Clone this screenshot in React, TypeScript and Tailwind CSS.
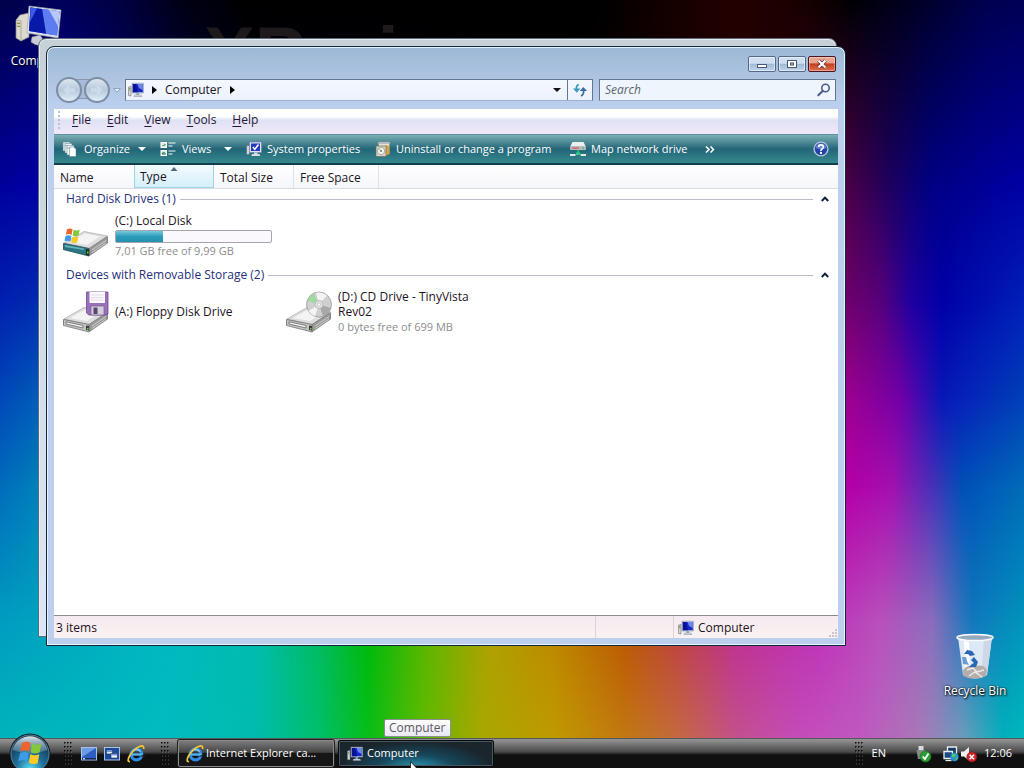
import React from "react";

/* ---------- wallpaper ---------- */

type Band = { from: number; to: number; colors: string };

const BANDS: Band[] = [
  {
    from: 100,
    to: 100,
    colors:
      "#00b4bb 0%, #00bcc0 16%, #00bcae 25%, #00bf6c 31%, #08be18 36%, #5abb00 41%, #a8a800 47%, #c09a00 54%, #c27812 61%, #c46a3e 66%, #c4508e 72%, #c44cba 78%, #c058c0 84%, #a87ab8 90%, #6c9cbc 94%, #00b0bc 98%, #00b8bc 100%",
  },
  {
    from: 84,
    to: 100,
    colors:
      "#009cc0 0%, #00b8c0 16%, #00bcae 25%, #00bb62 31%, #00b808 36%, #62b400 42%, #b0a000 48%, #bc8600 54%, #bb5400 61%, #bc3e40 66%, #bc2e90 72%, #be30b8 80%, #b850bc 86%, #8a6cbc 91%, #1078bc 95%, #0094bc 100%",
  },
  {
    from: 66,
    to: 84,
    colors:
      "#006cbc 0%, #0088b8 5%, #0090a0 30%, #508000 45%, #a04000 62%, #b00080 76%, #b400a8 83%, #a410b0 87%, #4830b8 91%, #0050b8 94%, #006cb8 100%",
  },
  {
    from: 54,
    to: 66,
    colors:
      "#0048b8 0%, #0064b8 5%, #006090 30%, #405000 50%, #803000 68%, #980080 80%, #9c0090 83%, #7000a8 88%, #0818b8 92%, #0040b8 100%",
  },
  {
    from: 41,
    to: 54,
    colors:
      "#0020b0 0%, #0030b0 5%, #004080 30%, #303000 50%, #700020 68%, #740068 82%, #58007c 86%, #2000a0 89%, #0000a8 92%, #0020b8 100%",
  },
  {
    from: 25,
    to: 41,
    colors:
      "#00009a 0%, #0000a8 5%, #000020 25%, #080000 55%, #240000 74%, #4c0044 82.500%, #1c0060 87%, #000084 91%, #0000a4 100%",
  },
  {
    from: 0,
    to: 25,
    colors:
      "#00004a 0%, #00005c 6%, #000040 12%, #000014 18%, #000000 24%, #000000 58%, #160000 66%, #240000 72%, #160000 79%, #000004 83%, #00001c 88%, #00004e 96%, #000054 100%",
  },
];

function Wallpaper() {
  return (
    <div className="absolute inset-0" aria-hidden="true">
      {BANDS.map((b) => (
        <div
          key={b.from}
          className="absolute inset-0"
          style={{
            backgroundImage: `linear-gradient(90deg, ${b.colors})`,
            maskImage:
              b.from === 100
                ? undefined
                : `linear-gradient(180deg, #000 ${b.from}%, transparent ${b.to}%)`,
          }}
        />
      ))}
    </div>
  );
}

/* ---------- icons ---------- */

function MonitorIcon({ className = "size-4" }: { className?: string }) {
  return (
    <svg viewBox="0 0 16 16" className={className} aria-hidden="true">
      <path d="M0.5 5 L3 4.500 V14 L0.5 13.5Z" fill="#d9dccf" stroke="#6a7078" strokeWidth=".6" />
      <path d="M1 6.500h1.400M1 8h1.400" stroke="#6c8c2c" strokeWidth=".8" />
      <path d="M4 1.200 H15.5 V11 H4Z" fill="#c9d3e6" stroke="#8795b4" strokeWidth=".6" />
      <path d="M4.800 2 H14.800 V10.200 H4.800Z" fill="#1828c4" />
      <path d="M9.5 2 H14.8 V8 L11 6Z" fill="#6e86ec" />
      <path d="M4.800 2h3.200l2 8.200H4.800z" fill="#0a1294" />
      <path d="M8.5 11h2.5v2H8.5z" fill="#9aa3b4" />
      <path d="M6.5 13h6.5l.8 1.5H6z" fill="#dfe4ea" stroke="#7b8494" strokeWidth=".5" />
    </svg>
  );
}

function DesktopComputerIcon() {
  return (
    <svg viewBox="0 0 48 42" className="h-[42px] w-12" aria-hidden="true">
      <path d="M1 16 L5 11 L14 9 V33 L6 37 L1 34Z" fill="#dcdad0" stroke="#8b8b88" strokeWidth=".7" />
      <path d="M1 16 L6 17 V37" fill="none" stroke="#a9a89c" />
      <path d="M2 19l3 .6M2 22l3 .6" stroke="#8b8620" strokeWidth="1.2" />
      <path d="M17 33 L25 31 L31 40 Q24 44 16 38Z" fill="#c9ccd4" stroke="#8c8f98" strokeWidth=".6" />
      <path d="M14 2 L46 6 L43 34 L12 29Z" fill="#dfe2e8" stroke="#a2a6b0" strokeWidth=".7" />
      <path d="M15.500 3.500 L44.500 7.200 L42 31.500 L14 27Z" fill="#2a50e0" />
      <path d="M27 5 L44.500 7.200 L42 31.500 L31 29.700Z" fill="#5c7cf0" />
      <path d="M34 5.900 L44.500 7.200 L43 22Z" fill="#b6c8ff" />
      <path d="M15.500 3.500 L27 5 L31 29.700 L14 27Z" fill="#0818a8" />
      <path d="M15.500 3.500 L22 4.300 L15 18Z" fill="#3c5ae8" />
    </svg>
  );
}

function BinIcon() {
  return (
    <svg viewBox="0 0 40 48" className="h-12 w-10" aria-hidden="true">
      <path d="M3 4 L37 4 L32 42 Q20 49 8 42Z" fill="#e6edf8" fillOpacity=".96" />
      <path d="M29 6 L37 4 L32 42 L26 45Z" fill="#cdd7e6" />
      <path d="M9 8 L14 9 L15 42 L10 40Z" fill="#fff" />
      <path d="M8 37 Q14 30 20 34 Q27 30 32 37 L31 43 Q20 49 8.500 43Z" fill="#b3adab" />
      <path d="M12 37l6-2 4 4 7-2M14 43l6-4 7 5" stroke="#ece9e6" strokeWidth="1.5" fill="none" />
      <ellipse cx="20" cy="4.500" rx="18" ry="3" fill="#97a9bd" stroke="#f7fbff" strokeWidth="1.500" />
      <path d="M9 21 L12 17 L17 18 L20 22 L15 23 L13 21Z" fill="#2a66b8" />
      <path d="M19 24 L23 29 L21 34 L14 34 L17 31 L19 30 L16 27Z" fill="#2a66b8" />
      <path d="M7 24 L11 24 L12 28 L14 32 L8 31Z" fill="#6c9cd8" />
    </svg>
  );
}

function DriveBody() {
  return (
    <>
      <path d="M1 32 L22 20 L46 25 L46 31 L27 44 L1 37Z" fill="#9a9a9a" />
      <path d="M2 31 L22 19.500 L45.500 24 L27 36.500Z" fill="#dedede" stroke="#a0a0a0" strokeWidth=".6" />
      <path d="M8 30 L23 21.500 L38 24.500 L25 33Z" fill="#f4f4f4" />
      <path d="M27 36.500 L45.500 24.500 V31 L27 44Z" fill="#999" stroke="#777" strokeWidth=".5" />
      <path d="M30 38 L44 28.500M30 40.500 L44 31" stroke="#dadada" strokeWidth=".8" />
      <path d="M1.500 31.500 L27 36.500 V44 L1.500 37.500Z" fill="#c4c4c4" stroke="#6e6e6e" strokeWidth=".7" />
      <path d="M4 33.800 L21 37.500 V40 L4 36Z" fill="#f4f4f4" stroke="#555" strokeWidth=".7" />
      <path d="M24 37.500 L27 38 V42.500 L24 42Z" fill="#383f30" />
      <path d="M25 40h1.500v1.500H25z" fill="#7ad044" />
    </>
  );
}

function Flag({ x, y, s }: { x: number; y: number; s: number }) {
  return (
    <g transform={`translate(${x} ${y}) scale(${s})`}>
      <path d="M2.500 1.500 Q6 -.5 9.200 1.500 L8 8.500 Q5 6.500 1 8.200Z" fill="#f0642c" />
      <path d="M10.500 2 Q14 4 18 2 L16.500 9 Q13 11 9.300 9Z" fill="#84c83c" />
      <path d="M.8 9.600 Q4.500 8 7.800 9.800 L6.600 16.500 Q3 14.500 -.6 16.200Z" fill="#3d9be8" />
      <path d="M9 10.400 Q12.500 12.400 16.200 10.500 L15 17.500 Q11.500 19.500 7.900 17.300Z" fill="#fbc825" />
    </g>
  );
}

function HardDriveIcon() {
  return (
    <svg viewBox="0 0 48 46" className="h-[46px] w-12" aria-hidden="true">
      <DriveBody />
      <path d="M1.500 31.500 L27 36.500 V44 L1.500 37.500Z" fill="#2a7684" stroke="#245058" strokeWidth=".6" />
      <path d="M3 33 L22 36.500 V38 L3 35Z" fill="#65b5bb" />
      <path d="M24 37 L27 37.600 V43.500 L24 43Z" fill="#222c20" />
      <path d="M25 39.500h1.500v2H25z" fill="#72d644" />
      <Flag x={3} y={16} s={0.82} />
    </svg>
  );
}

function FloppyDriveIcon() {
  return (
    <svg viewBox="0 0 48 46" className="h-[46px] w-12" aria-hidden="true">
      <DriveBody />
      <path d="M24.500 4 H46 V26 L43 27 H27 L24.500 25Z" fill="#9a70bc" stroke="#6e478e" strokeWidth=".8" />
      <path d="M27.500 4 H43 V15 H27.500Z" fill="#fcf8ff" />
      <path d="M29 7h12.500M29 9.500h12.500M29 12h12.500" stroke="#ddd2e6" strokeWidth=".8" />
      <path d="M29 18 H42 V27 H29Z" fill="#d4cfdc" stroke="#775c8c" strokeWidth=".7" />
      <path d="M31.500 19.500h4V26h-4z" fill="#5c4470" />
    </svg>
  );
}

function CdDriveIcon() {
  return (
    <svg viewBox="0 0 48 46" className="h-[46px] w-12" aria-hidden="true">
      <DriveBody />
      <circle cx="34" cy="16.500" r="12.500" fill="#cfd1d1" stroke="#999" strokeWidth=".8" />
      <path d="M34 16.500 L22.500 13 A12.500 12.500 0 0 1 29 5.500Z" fill="#a4d8a2" />
      <path d="M34 16.500 L31 4.800 A12.500 12.500 0 0 1 42 7.500Z" fill="#f4f4f4" />
      <path d="M34 16.500 L46 20 A12.500 12.500 0 0 1 38 28Z" fill="#a6a8aa" />
      <path d="M34 16.500 L30 28.200 A12.500 12.500 0 0 1 23.500 23Z" fill="#f4f4f4" />
      <circle cx="34" cy="16.500" r="4" fill="#ececec" stroke="#aaa" strokeWidth=".8" />
      <circle cx="34" cy="16.500" r="1.700" fill="#fff" stroke="#999" strokeWidth=".6" />
    </svg>
  );
}

function OrganizeIcon() {
  return (
    <svg viewBox="0 0 16 16" className="size-4" aria-hidden="true">
      <path d="M1 1h7v9H1z" fill="#dfe9ee" stroke="#5d818e" strokeWidth=".5" />
      <path d="M3 2.500h7v9.500H3z" fill="#eff4f6" stroke="#5d818e" strokeWidth=".5" />
      <path d="M5 4.500h7V14H5z" fill="#f7fafb" stroke="#5d818e" strokeWidth=".5" />
      <path d="M7.500 6h4l2.500 2v7.500H7.500z" fill="#fff" stroke="#5d818e" strokeWidth=".5" />
      <path d="M3 4.500h3M4.500 7h4" stroke="#7ba5b4" strokeWidth=".8" />
    </svg>
  );
}

function ViewsIcon() {
  return (
    <svg viewBox="0 0 16 16" className="size-4" aria-hidden="true">
      <rect x="1" y="1.500" width="5.500" height="5" fill="#dbeee8" stroke="#fff" />
      <rect x="1" y="9.500" width="5.500" height="5" fill="#dbeee8" stroke="#fff" />
      <path d="M2.500 4l1 1L5.500 3M2 13l1.500-2L5.500 13z" stroke="#267446" fill="none" />
      <path d="M8.500 2h7M8.500 5h4M8.500 10h7M8.500 13h4" stroke="#f2fbfc" strokeWidth="1.200" />
    </svg>
  );
}

function SystemIcon() {
  return (
    <svg viewBox="0 0 16 16" className="size-4" aria-hidden="true">
      <path d="M.5 4.500h3v9h-3z" fill="#d2d6dc" stroke="#56647c" strokeWidth=".6" />
      <path d="M3.500 1h12v10.500h-12z" fill="#dce3f2" stroke="#7482a8" strokeWidth=".7" />
      <path d="M5 2.500h9V10H5z" fill="#2438c0" />
      <path d="M6.800 6l2 2.300L12.500 3.500" stroke="#fff" strokeWidth="1.500" fill="none" />
      <path d="M8 11.500h3.500V13H8zM6 13h7.500l.8 2H5.300z" fill="#d8dce4" />
    </svg>
  );
}

function UninstallIcon() {
  return (
    <svg viewBox="0 0 16 16" className="size-4" aria-hidden="true">
      <path d="M3.500 1h11v12h-11z" fill="#e9e2d0" stroke="#8f8a78" strokeWidth=".6" />
      <path d="M3.500 1h11v2h-11z" fill="#b4bcc4" />
      <path d="M11 4l3 1v8l-3 2z" fill="#e2a33a" />
      <path d="M1 5h10v10.500H1z" fill="#d8d6c8" stroke="#6a6a5a" strokeWidth=".7" />
      <circle cx="6" cy="10" r="3.700" fill="#f2f3f0" stroke="#8e938e" strokeWidth=".7" />
      <circle cx="6" cy="10" r="1.100" fill="#6d8870" />
      <path d="M6 8.800L4 6.800A3.700 3.700 0 0 0 2.400 9z" fill="#a4cf88" />
    </svg>
  );
}

function NetworkDriveIcon() {
  return (
    <svg viewBox="0 0 16 16" className="size-4" aria-hidden="true">
      <path d="M2.500 1h11L15.500 5v4H.5V5z" fill="#eeeef0" />
      <path d="M.5 5h15v4H.5z" fill="#b9bdc3" />
      <path d="M2 6.500h7v1.200H2z" fill="#d94f4f" />
      <path d="M12 6.500h2v1.200h-2z" fill="#48b858" />
      <path d="M7 9h2.200v4H7z" fill="#1fae74" />
      <path d="M6 11.500h4.200v2.500H6z" fill="#37c98c" />
      <path d="M0 13h5.500v2H0zM10.700 13H16v2h-5.300z" fill="#dfe9ea" />
    </svg>
  );
}

function HelpIcon() {
  return (
    <svg viewBox="0 0 18 18" className="size-[18px]" aria-hidden="true">
      <circle cx="9" cy="9" r="6.900" fill="#2343a8" stroke="#b4c8dc" strokeWidth="1.400" />
      <path d="M3.500 8a5.600 5.600 0 0 1 11 0Q9 10 3.500 8z" fill="#6686d4" />
      <path d="M6.700 7Q6.800 4.800 9 4.800T11.300 7Q11.300 8.300 10 9T9 11" stroke="#fff" strokeWidth="1.700" fill="none" />
      <rect x="8" y="12" width="2" height="2" fill="#fff" />
    </svg>
  );
}

function Caret({ className }: { className: string }) {
  return (
    <svg viewBox="0 0 8 4" className={`h-1 w-2 ${className}`} aria-hidden="true">
      <path d="M0 0h8L4 4z" fill="currentColor" />
    </svg>
  );
}

function Crumb() {
  return (
    <svg viewBox="0 0 5 8" className="h-2 w-[5px] text-black" aria-hidden="true">
      <path d="M0 0l5 4-5 4z" fill="currentColor" />
    </svg>
  );
}

function RefreshIcon() {
  return (
    <svg viewBox="0 0 16 16" className="size-4" aria-hidden="true">
      <path d="M6.800 2.500Q3.800 3.500 4.500 8" stroke="#3c9abc" strokeWidth="1.800" fill="none" />
      <path d="M1 6.500h7.400L4.800 10.800z" fill="#3c9abc" />
      <path d="M9 13.800q3.200-1 2.500-6" stroke="#3c6aa4" strokeWidth="1.800" fill="none" />
      <path d="M7.800 9h7.400L11.200 5z" fill="#3c6aa4" />
    </svg>
  );
}

function SearchGlyph() {
  return (
    <svg viewBox="0 0 14 14" className="size-3.5" aria-hidden="true">
      <circle cx="8.500" cy="5" r="3.700" fill="#f2f6ff" stroke="#4c5f8c" strokeWidth="1.600" />
      <path d="M5.800 7.800L1.300 12.300" stroke="#4c5f8c" strokeWidth="2" strokeLinecap="round" />
    </svg>
  );
}

function NavOrbs() {
  return (
    <div className="relative flex gap-0.5">
      <span className="absolute inset-x-3 top-0.5 h-5 border-y border-[#8799b2] bg-[#a9bcd6]" />
      {["Back", "Forward"].map((label) => (
        <button
          key={label}
          aria-label={label}
          className="relative flex size-[26px] items-center justify-center rounded-full border-2 border-[#7c8da6] bg-linear-to-b from-[#dce6f0] via-[#b6c8da] to-[#e2eef8]"
        >
          <svg viewBox="0 0 14 12" className={label === "Back" ? "h-3 w-3.5" : "h-3 w-3.5 -scale-x-100"} aria-hidden="true">
            <path d="M7 1L1 6l6 5V7.700h6V4.300H7z" fill="#e0eaf5" fillOpacity=".5" />
          </svg>
        </button>
      ))}
    </div>
  );
}

function IeIcon() {
  return (
    <svg viewBox="0 0 18 18" className="size-[18px]" aria-hidden="true">
      <circle cx="9.500" cy="9.500" r="5.300" fill="none" stroke="#2b8ce4" strokeWidth="3.200" />
      <path d="M5 9.500h10.500" stroke="#52b4f6" strokeWidth="2.400" />
      <path d="M12 11.500h6v-1l-1-1" fill="#1b2026" />
      <path d="M5.400 6.500Q9.500 2.500 13.600 6.500" stroke="#8cd0fb" strokeWidth="1.200" fill="none" />
      <path d="M3 16.500Q-.5 17 2.500 11 Q6.500 4 12.500 1.500 Q17.500 -.5 16.500 4" stroke="#f6c632" strokeWidth="1.700" fill="none" />
    </svg>
  );
}

function StartOrb() {
  return (
    <svg viewBox="0 0 42 42" className="size-[42px]" aria-hidden="true">
      <defs>
        <radialGradient id="orb" cx=".5" cy=".9" r=".8">
          <stop offset="0" stopColor="#5ee0f4" />
          <stop offset=".45" stopColor="#20719c" />
          <stop offset="1" stopColor="#14314c" />
        </radialGradient>
        <linearGradient id="orbShine" x1="0" y1="0" x2="0" y2="1">
          <stop offset="0" stopColor="#e8f2f8" stopOpacity=".95" />
          <stop offset="1" stopColor="#a4bccb" stopOpacity=".25" />
        </linearGradient>
      </defs>
      <circle cx="21" cy="21" r="20.500" fill="#0c1a26" />
      <circle cx="21" cy="21" r="19" fill="url(#orb)" stroke="#5c8496" />
      <path d="M3.500 17A18 18 0 0 1 38.500 17Q21 24 3.500 17z" fill="url(#orbShine)" />
      <Flag x={10} y={8} s={1.25} />
    </svg>
  );
}

function ShowDesktopIcon() {
  return (
    <svg viewBox="0 0 16 14" className="h-3.5 w-4" aria-hidden="true">
      <rect x=".5" y=".5" width="15" height="12.500" fill="#2c5fc0" stroke="#a9c2e6" />
      <path d="M1 1h14L1 10z" fill="#6d9ae4" />
      <path d="M1 11h14v1.500H1z" fill="#17284e" />
      <path d="M2 11h2v1.500H2z" fill="#a8d8f2" />
    </svg>
  );
}

function SwitcherIcon() {
  return (
    <svg viewBox="0 0 16 14" className="h-3.5 w-4" aria-hidden="true">
      <rect x=".5" y=".5" width="15" height="12.500" fill="#204a9c" stroke="#a9c2e6" />
      <path d="M2.500 3h6v4h-6z" fill="#dceafc" stroke="#12285c" strokeWidth=".6" />
      <path d="M7 6.500h6.500v4.500H7z" fill="#eef5fe" stroke="#12285c" strokeWidth=".6" />
      <path d="M3 4.200h5M7.500 7.800h5.500" stroke="#3c72c8" />
    </svg>
  );
}

function Grip() {
  return (
    <svg viewBox="0 0 9 24" className="h-6 w-[9px]" aria-hidden="true">
      <defs>
        <pattern id="grip" width="3" height="4" patternUnits="userSpaceOnUse">
          <rect width="1.500" height="1.500" fill="#0a0a0a" />
          <rect x="1" y="1.500" width="1" height="1" fill="#8a8a8a" fillOpacity=".6" />
        </pattern>
      </defs>
      <rect width="9" height="24" fill="url(#grip)" />
    </svg>
  );
}

function UsbIcon() {
  return (
    <svg viewBox="0 0 18 18" className="size-[18px]" aria-hidden="true">
      <path d="M4.500 1h5v4h-5z" fill="#d8dcdc" />
      <path d="M2.500 5h8.500v9H4z" fill="#858b8b" />
      <circle cx="11.500" cy="11.500" r="5.500" fill="#2c9c34" stroke="#156a1c" strokeWidth=".6" />
      <path d="M8.700 11.500l2.200 2.500L14.500 8.500" stroke="#fff" strokeWidth="1.700" fill="none" />
    </svg>
  );
}

function NetIcon() {
  return (
    <svg viewBox="0 0 18 18" className="size-[18px]" aria-hidden="true">
      <path d="M5.500 2h9v8h-9z" fill="#163a66" stroke="#e8eef4" strokeWidth="1.300" />
      <path d="M2 6.500h8.500v7H2z" fill="#1c4a80" stroke="#e8eef4" strokeWidth="1.300" />
      <path d="M3.500 15.500h6" stroke="#e8eef4" strokeWidth="1.300" />
      <circle cx="12.500" cy="12" r="4.200" fill="#2492d8" />
      <path d="M10 9.500q3-2 4 1l-2 2-2-.5zM13 13l3-.5-2 3z" fill="#5cc25c" />
    </svg>
  );
}

function MutedIcon() {
  return (
    <svg viewBox="0 0 18 18" className="size-[18px]" aria-hidden="true">
      <path d="M1 6.500h3L9 2v13.500L4 11.500H1z" fill="#eef0f2" />
      <circle cx="11.800" cy="12" r="5" fill="#d22424" stroke="#8c1010" strokeWidth=".6" />
      <path d="M9.600 9.800l4.400 4.400M14 9.800l-4.400 4.400" stroke="#fff" strokeWidth="1.600" />
    </svg>
  );
}

/* ---------- explorer window ---------- */

const captionClass =
  "flex h-4 w-7 items-center justify-center rounded-xs border border-[#52698a] bg-linear-to-b from-[#cfdff1] from-45% via-[#a2b9d4] via-50% to-[#c0d6ee] shadow-[inset_0_0_0_1px_rgba(255,255,255,.5)]";

function CaptionButtons() {
  return (
    <div className="flex justify-end gap-0.5 pr-0.5">
      <button aria-label="Minimize" className={captionClass}>
        <svg viewBox="0 0 12 10" className="h-2.5 w-3" aria-hidden="true">
          <rect x="1.500" y="5.500" width="9" height="3" fill="#fff" stroke="#4a5a74" />
        </svg>
      </button>
      <button aria-label="Maximize" className={captionClass}>
        <svg viewBox="0 0 12 10" className="h-2.5 w-3" aria-hidden="true">
          <rect x="1.500" y="1.500" width="9" height="7" fill="#fff" stroke="#4a5a74" />
          <rect x="4.500" y="4" width="3" height="2" fill="#b4c8e0" stroke="#4a5a74" />
        </svg>
      </button>
      <button
        aria-label="Close"
        className="flex h-4 w-7 items-center justify-center rounded-xs border border-[#4a1420] bg-linear-to-b from-[#eba58f] from-40% via-[#c23c22] via-50% to-[#e0704e] shadow-[inset_0_0_0_1px_rgba(255,255,255,.35)]"
      >
        <svg viewBox="0 0 12 10" className="h-2.5 w-3" aria-hidden="true">
          <path d="M2.500 1.500l7 7M9.500 1.500l-7 7" stroke="#5c3038" strokeWidth="3.800" />
          <path d="M2.500 1.500l7 7M9.500 1.500l-7 7" stroke="#fff" strokeWidth="2.200" />
        </svg>
      </button>
    </div>
  );
}

function AddressRow() {
  return (
    <div className="flex items-center pt-[5px]">
      <div className="ml-0.5">
        <NavOrbs />
      </div>
      <button aria-label="Recent pages" className="ml-[3px] w-2">
        <svg viewBox="0 0 8 5" className="h-[5px] w-2" aria-hidden="true">
          <path d="M.7.500h6.600L4 4.300z" fill="#e8f0fa" stroke="#7e96b8" strokeWidth=".8" />
        </svg>
      </button>
      <div className="ml-1 flex h-[22px] min-w-0 flex-1 border border-[#63758f] border-b-[#9fb2cc] bg-linear-to-b from-[#f4f8ff] to-[#ecf2fc]">
        <div className="flex min-w-0 flex-1 items-center pl-0.5">
          <MonitorIcon />
          <span className="ml-2">
            <Crumb />
          </span>
          <button className="mx-2">Computer</button>
          <Crumb />
        </div>
        <button aria-label="Previous locations" className="flex w-5 items-center justify-center">
          <Caret className="text-[#101018]" />
        </button>
        <button aria-label="Refresh" className="flex w-[25px] items-center justify-center border-l border-[#63758f]">
          <RefreshIcon />
        </button>
      </div>
      <label className="mr-0.5 ml-1.5 flex h-[22px] w-[237px] items-center border border-[#63758f] border-b-[#9fb2cc] bg-[#eff5fd] pr-1 pl-[5px]">
        <input
          type="search"
          aria-label="Search"
          placeholder="Search"
          className="min-w-0 flex-1 bg-transparent italic outline-none placeholder:text-[#5c6470]"
        />
        <SearchGlyph />
      </label>
    </div>
  );
}

function MenuBar() {
  const items = ["File", "Edit", "View", "Tools", "Help"];
  return (
    <nav className="flex h-[25px] items-center bg-linear-to-b from-white from-30% via-[#dfe2f3] via-45% to-[#f0e8fa] pb-[3px]">
      <span className="ml-1 h-[18px] border-l-2 border-dotted border-[#b3c3da]" />
      <div className="ml-3 flex gap-4">
        {items.map((item) => (
          <button key={item} className="text-[#241838]">
            <span className="underline underline-offset-2">{item[0]}</span>
            {item.slice(1)}
          </button>
        ))}
      </div>
    </nav>
  );
}

function ToolBar() {
  return (
    <div className="flex h-[31px] items-center border-t border-b-2 border-t-[#5f929f] border-b-[#123f50] bg-linear-to-b from-[#7ab0b4] via-[#226678] via-50% to-[#37898e] pr-2 pl-2 text-[11px] whitespace-nowrap text-white">
      <button className="flex w-[98px] items-center">
        <OrganizeIcon />
        <span className="ml-1.5 flex-1 text-left">Organize</span>
        <Caret className="mr-3.5" />
      </button>
      <button className="flex w-[86px] items-center">
        <ViewsIcon />
        <span className="ml-1.5 flex-1 text-left">Views</span>
        <Caret className="mr-3.5" />
      </button>
      <button className="flex w-[129px] items-center gap-[5px]">
        <SystemIcon />
        System properties
      </button>
      <button className="flex w-[195px] items-center gap-[5px]">
        <UninstallIcon />
        Uninstall or change a program
      </button>
      <button className="flex w-[135px] items-center gap-[5px]">
        <NetworkDriveIcon />
        Map network drive
      </button>
      <button aria-label="More commands">
        <svg viewBox="0 0 10 7" className="h-[7px] w-2.5" aria-hidden="true">
          <path d="M1 .5l3 3-3 3M5.500.5l3 3-3 3" stroke="#fff" strokeWidth="1.500" fill="none" />
        </svg>
      </button>
      <button aria-label="Help" className="ml-auto">
        <HelpIcon />
      </button>
    </div>
  );
}

function ColumnHeaders() {
  return (
    <div className="flex h-6 border-b border-[#dcdde2] bg-linear-to-b from-white to-[#f5f6fa]">
      <button className="w-20 pt-0.5 pl-1.5 text-left">Name</button>
      <button className="relative w-20 border border-t-0 border-[#9ad4e6] bg-linear-to-b from-[#f3fbfe] to-[#d5effa] pt-0.5 pl-[5px] text-left">
        Type
        <svg viewBox="0 0 7 4" className="absolute top-0.5 left-1/2 h-1 w-[7px] -translate-x-1/2" aria-hidden="true">
          <path d="M0 4l3.500-4L7 4z" fill="#4e6a78" />
        </svg>
      </button>
      <button className="w-20 border-r border-[#dfe2ea] pt-0.5 pl-1.5 text-left">Total Size</button>
      <button className="w-[85px] border-r border-[#dfe2ea] pt-0.5 pl-1.5 text-left">Free Space</button>
    </div>
  );
}

function GroupHeading({ title }: { title: string }) {
  return (
    <div className="flex h-5 items-center pr-px">
      <h2 className="text-[#26307c]">{title}</h2>
      <span className="ml-1 h-px flex-1 bg-[#b9bec8]" />
      <button aria-label={`Collapse ${title}`} className="ml-2">
        <svg viewBox="0 0 8 6" className="h-1.5 w-2" aria-hidden="true">
          <path d="M.8 5L4 1.600 7.200 5" stroke="#10203c" strokeWidth="2" fill="none" />
        </svg>
      </button>
    </div>
  );
}

function Tile({ icon, children }: { icon: React.ReactNode; children: React.ReactNode }) {
  return (
    <div className="flex h-[46px] w-[223px] items-center gap-[5px] leading-[15px]">
      {icon}
      <div className="min-w-0 flex-1">{children}</div>
    </div>
  );
}

function ExplorerWindow() {
  return (
    <section className="absolute top-[46px] right-[178px] bottom-[92px] left-[46px] flex flex-col rounded-t-lg border border-[#10283c] bg-linear-to-b from-[#9db8d4] to-[#bcd0ee] to-[60px] px-[7px] pt-[9px] pb-[7px] text-[#1c1424] shadow-[inset_0_0_0_1px_rgba(235,245,255,.9)]">
      <CaptionButtons />
      <AddressRow />
      <div className="mt-1.5 flex min-h-0 flex-1 flex-col bg-white">
        <MenuBar />
        <ToolBar />
        <ColumnHeaders />
        <main className="min-h-0 flex-1">
          <div className="pr-2 pl-3">
            <GroupHeading title="Hard Disk Drives (1)" />
          </div>
          <div className="flex pt-[3px] pb-[7px] pl-2">
            <Tile icon={<HardDriveIcon />}>
              <p className="mb-0.5">(C:) Local Disk</p>
              <div
                role="meter"
                aria-label="Space used"
                aria-valuenow={30}
                className="h-[13px] w-[157px] rounded-xs border border-[#a8a4ac] bg-[#faf8fc]"
              >
                <div className="h-full w-[30%] bg-linear-to-b from-[#74cade] via-[#2a9cba] via-50% to-[#2590ae]" />
              </div>
              <p className="text-[11px] text-[#8c8c8c]">7,01 GB free of 9,99 GB</p>
            </Tile>
          </div>
          <div className="pr-2 pl-3">
            <GroupHeading title="Devices with Removable Storage (2)" />
          </div>
          <div className="flex pt-[3px] pl-2">
            <Tile icon={<FloppyDriveIcon />}>
              <p>(A:) Floppy Disk Drive</p>
            </Tile>
            <Tile icon={<CdDriveIcon />}>
              <p className="max-w-36">(D:) CD Drive - TinyVista Rev02</p>
              <p className="text-[11px] whitespace-nowrap text-[#8c8c8c]">0 bytes free of 699 MB</p>
            </Tile>
          </div>
        </main>
        <footer className="flex h-[23px] items-center border-t border-[#8e8a92] bg-linear-to-b from-[#f5eaf0] to-[#faf2f1]">
          <span className="flex-1 pt-0.5 pl-0.5">3 items</span>
          <span className="h-full w-[78px] border-l border-[#dcd2d8]" />
          <span className="flex h-full w-[165px] items-center gap-1 border-l border-[#dcd2d8] pt-0.5 pl-1">
            <MonitorIcon />
            Computer
            <svg viewBox="0 0 9 9" className="mt-auto ml-auto size-[9px]" aria-hidden="true">
              <path d="M6 0h2v2H6zM3 3h2v2H3zM6 3h2v2H6zM0 6h2v2H0zM3 6h2v2H3zM6 6h2v2H6z" fill="#cfc4cb" />
            </svg>
          </span>
        </footer>
      </div>
    </section>
  );
}

/* ---------- taskbar ---------- */

function TaskBar() {
  return (
    <footer className="relative flex h-[30px] shrink-0 items-center border-t border-[#54585a] bg-linear-to-b from-[#909090] from-4% via-[#484848] via-45% to-[#101010] to-55% text-[11px] text-white">
      <button aria-label="Start" className="-mt-1.5 ml-[9px] self-start">
        <StartOrb />
      </button>
      <div className="ml-[13px] flex items-center">
        <Grip />
        <div className="mr-4 ml-2 flex items-center gap-[7px]">
          <button aria-label="Show desktop">
            <ShowDesktopIcon />
          </button>
          <button aria-label="Switch between windows">
            <SwitcherIcon />
          </button>
          <button aria-label="Internet Explorer">
            <IeIcon />
          </button>
        </div>
        <Grip />
      </div>
      <div className="ml-2 flex gap-1">
        <button className="flex h-[27px] w-[156px] items-center gap-0.5 rounded-xs border border-[#8a8a8a] bg-linear-to-b from-[#7c7c7c] via-[#454545] via-45% to-[#161616] to-50% pl-[7px] shadow-[0_0_0_1px_#202020]">
          <IeIcon />
          Internet Explorer ca...
        </button>
        <button className="flex h-[27px] w-[156px] items-center gap-1 rounded-xs border border-[#080c10] bg-[radial-gradient(ellipse_at_50%_110%,#2c9cbc_0%,#16485c_35%,#1a252c_70%)] pl-2 shadow-[inset_0_0_0_1px_#47565e]">
          <MonitorIcon />
          Computer
        </button>
      </div>
      <div className="ml-auto flex items-center pr-3">
        <Grip />
        <span className="ml-2">EN</span>
        <div className="ml-7 flex items-center">
          <UsbIcon />
          <span className="ml-2.5 flex">
            <NetIcon />
            <MutedIcon />
          </span>
        </div>
        <time className="ml-1.5">12:06</time>
      </div>
    </footer>
  );
}

export default function App() {
  return (
    <div className="relative flex h-screen cursor-default flex-col overflow-hidden font-['Open_Sans','Noto_Sans',sans-serif] text-xs">
      <div className="relative min-h-0 flex-1">
        <Wallpaper />
        <div
          className="absolute top-[14px] left-[204px] flex gap-[72px] font-['Liberation_Sans',sans-serif] text-[76px] leading-[80px] font-bold text-[#1e1a1c]"
          aria-hidden="true"
        >
          <span>XP</span>
          <span>i</span>
        </div>
        <a href="#computer" className="absolute top-1 left-0 flex w-[78px] flex-col items-center gap-[7px] text-white [text-shadow:1px_1px_2px_#000]">
          <DesktopComputerIcon />
          Computer
        </a>
        <a href="#recycle-bin" className="absolute right-0 bottom-[39px] flex w-[98px] flex-col items-center gap-0.5 text-white [text-shadow:1px_1px_2px_#000,0_0_2px_#000]">
          <BinIcon />
          Recycle Bin
        </a>
        <div className="absolute top-[38px] right-[187px] bottom-[101px] left-[38px] rounded-t-lg border border-[#5c6c78] bg-linear-to-b from-[#c6d0d6] to-[#dde6f6] shadow-[inset_0_0_0_1px_rgba(235,240,245,.8)]" />
        <ExplorerWindow />
        <div role="tooltip" className="absolute bottom-px left-[384px] rounded-xs border border-[#8c8c94] bg-linear-to-b from-white to-[#e8e8f4] px-1 leading-4 text-[#5c5862]">
          Computer
        </div>
      </div>
      <TaskBar />
      <svg viewBox="0 0 12 19" className="absolute top-[761px] left-[410px] h-[19px] w-3" aria-hidden="true">
        <path d="M.5.700V15l3.300-3 2.400 5.500 2.200-1L6 11.200h4.700z" fill="#fff" stroke="#101010" strokeWidth=".8" />
      </svg>
    </div>
  );
}
